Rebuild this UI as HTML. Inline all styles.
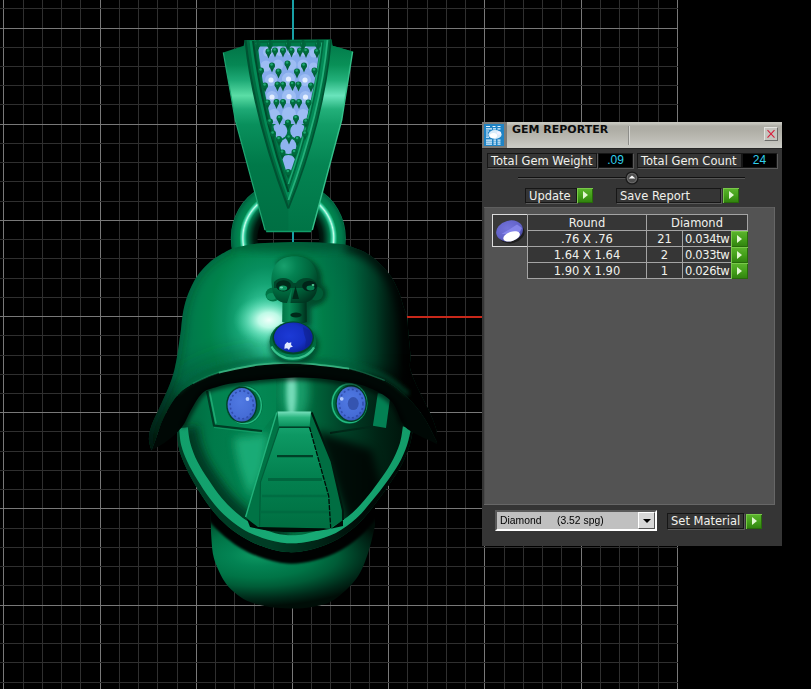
<!DOCTYPE html>
<html><head><meta charset="utf-8"><title>Gem Reporter</title>
<style>
html,body{margin:0;padding:0;background:#000;}
body{width:811px;height:689px;overflow:hidden;font-family:"DejaVu Sans","Liberation Sans",sans-serif;}
#vp{position:relative;width:811px;height:689px;background:#000;overflow:hidden;}
#grid{position:absolute;left:0;top:0;width:678px;height:689px;overflow:hidden;}
#grid i{position:absolute;display:block;}
#grid i.v{top:0;width:1px;height:689px;}
#grid i.h{left:0;height:1px;width:678px;}
#grid i.m{background:#2f2f2f;}
#grid i.M{background:#787878;}
#axisx{position:absolute;left:293px;top:316px;width:400px;height:2px;background:#c8281a;}
#axisy{position:absolute;left:292px;top:0;width:2px;height:317px;background:#18a0a6;}
#model{position:absolute;left:0;top:0;}
/* panel */
#panel{position:absolute;left:482px;top:122px;width:300px;height:424px;background:#353535;font-size:11.5px;color:#f1f1ec;}
#tbar{position:absolute;left:0;top:0;width:300px;height:26px;box-shadow:0 1px 0 #262626;background:linear-gradient(#c9c9c1 0,#c3c3bb 2px,#aeada5 4px,#b0afa7 9px,#bcbbb4 17px,#c9c9c3 24px,#cacac4 26px);}
#ticon{position:absolute;left:0;top:0;}
#ttl{position:absolute;left:30px;top:0px;font-weight:bold;font-size:11px;color:#0c0c0c;line-height:16px;white-space:nowrap;}
#tdiv{position:absolute;left:146px;top:4px;width:1px;height:19px;background:#8d8d89;border-right:1px solid #d8d8d4;}
#xbtn{position:absolute;left:282px;top:5px;width:12px;height:12px;background:#c4c4be;border:1px solid #6c6c6a;border-top-color:#e4e4e0;border-left-color:#e4e4e0;line-height:0;}
.lbl{position:absolute;padding-left:3px;height:13px;line-height:14px;border:1px solid #161616;background:#353535;white-space:nowrap;color:#f1f1ec;box-shadow:1px 1px 0 #5a5a5a;}
.val{position:absolute;height:13px;line-height:13px;border:1px solid #161616;background:#000;color:#30d0ec;text-align:center;font-family:"Liberation Sans",sans-serif;font-size:12px;box-shadow:1px 1px 0 #5a5a5a;}
.go{position:absolute;display:block;width:16px;height:15px;background:linear-gradient(#5db52e,#44a01a 50%,#2f800e);box-shadow:inset 1px 1px 0 #79c84a,inset -1px -1px 0 #276b0a;}
.go:after{content:"";position:absolute;left:6px;top:3px;border-left:5px solid #e2f6d2;border-top:4px solid transparent;border-bottom:4px solid transparent;}
#sep{position:absolute;left:36px;top:55px;width:227px;height:1px;background:#111;border-bottom:1px solid #555;}
#knob{position:absolute;left:142px;top:48px;}
#inner{position:absolute;left:2px;top:85px;width:291px;height:298px;background:#535353;box-shadow:inset -1px -1px 0 #676767,inset 0 1px 0 #5e5e5e,inset 1px 0 0 #4a4a4a;}
#gem{position:absolute;left:8px;top:7px;width:34px;height:31px;border:1px solid #dcdcdc;background:#393939;line-height:0;}
#tb{position:absolute;left:43px;top:7px;border-collapse:collapse;font-size:11.5px;color:#f1f1ec;}
#tb td{border:1px solid #a4a4a4;background:#363636;height:15px;line-height:14px;padding:0;text-align:center;white-space:nowrap;position:relative;}
#tb .c1{width:118px;}
#tb .c3{width:35px;}
#tb .c4{width:65px;text-align:left;padding-left:2px;box-sizing:border-box;letter-spacing:-0.35px;}
#tb .g2{right:-1px;top:0;width:17px;height:16px;}
#tb .g2:after{top:4px;}
#sel{position:absolute;left:13px;top:388px;width:158px;height:17px;background:#c0c0c0;border:2px solid;border-color:#5a5a5a #fff #fff #5a5a5a;font-family:"Liberation Sans",sans-serif;font-size:12px;color:#000;}
#seltx,#seltx2{position:absolute;left:3px;top:1px;line-height:15px;white-space:nowrap;font-size:11.5px;transform:scaleX(0.9);transform-origin:0 0;}
#seltx2{left:60px;}
#dd{position:absolute;right:0;top:0;width:15px;height:15px;background:#d8d8d8;border:1px solid;border-color:#fff #555 #555 #fff;}
#dd i{position:absolute;left:4px;top:6px;border-top:4px solid #000;border-left:4px solid transparent;border-right:4px solid transparent;}

</style></head>
<body>
<div id="vp">
<div id="grid">
<i class="v M" style="left:3px"></i>
<i class="v m" style="left:23px"></i>
<i class="v m" style="left:42px"></i>
<i class="v m" style="left:61px"></i>
<i class="v m" style="left:80px"></i>
<i class="v M" style="left:100px"></i>
<i class="v m" style="left:119px"></i>
<i class="v m" style="left:138px"></i>
<i class="v m" style="left:157px"></i>
<i class="v m" style="left:177px"></i>
<i class="v M" style="left:196px"></i>
<i class="v m" style="left:215px"></i>
<i class="v m" style="left:234px"></i>
<i class="v m" style="left:254px"></i>
<i class="v m" style="left:273px"></i>
<i class="v M" style="left:292px"></i>
<i class="v m" style="left:311px"></i>
<i class="v m" style="left:330px"></i>
<i class="v m" style="left:350px"></i>
<i class="v m" style="left:369px"></i>
<i class="v M" style="left:388px"></i>
<i class="v m" style="left:407px"></i>
<i class="v m" style="left:427px"></i>
<i class="v m" style="left:446px"></i>
<i class="v m" style="left:465px"></i>
<i class="v M" style="left:484px"></i>
<i class="v m" style="left:504px"></i>
<i class="v m" style="left:523px"></i>
<i class="v m" style="left:542px"></i>
<i class="v m" style="left:561px"></i>
<i class="v M" style="left:581px"></i>
<i class="v m" style="left:600px"></i>
<i class="v m" style="left:619px"></i>
<i class="v m" style="left:638px"></i>
<i class="v m" style="left:658px"></i>
<i class="v M" style="left:677px"></i>
<i class="h m" style="top:8px"></i>
<i class="h M" style="top:28px"></i>
<i class="h m" style="top:47px"></i>
<i class="h m" style="top:66px"></i>
<i class="h m" style="top:85px"></i>
<i class="h m" style="top:104px"></i>
<i class="h M" style="top:124px"></i>
<i class="h m" style="top:143px"></i>
<i class="h m" style="top:162px"></i>
<i class="h m" style="top:181px"></i>
<i class="h m" style="top:201px"></i>
<i class="h M" style="top:220px"></i>
<i class="h m" style="top:239px"></i>
<i class="h m" style="top:258px"></i>
<i class="h m" style="top:278px"></i>
<i class="h m" style="top:297px"></i>
<i class="h M" style="top:316px"></i>
<i class="h m" style="top:335px"></i>
<i class="h m" style="top:355px"></i>
<i class="h m" style="top:374px"></i>
<i class="h m" style="top:393px"></i>
<i class="h M" style="top:412px"></i>
<i class="h m" style="top:431px"></i>
<i class="h m" style="top:451px"></i>
<i class="h m" style="top:470px"></i>
<i class="h m" style="top:489px"></i>
<i class="h M" style="top:508px"></i>
<i class="h m" style="top:528px"></i>
<i class="h m" style="top:547px"></i>
<i class="h m" style="top:566px"></i>
<i class="h m" style="top:585px"></i>
<i class="h M" style="top:605px"></i>
<i class="h m" style="top:624px"></i>
<i class="h m" style="top:643px"></i>
<i class="h m" style="top:662px"></i>
<i class="h m" style="top:682px"></i>
</div>
<div id="axisx"></div>
<div id="axisy"></div>
<svg id="model" width="811" height="689" viewBox="0 0 811 689">
<defs>
<radialGradient id="gHelm" gradientUnits="userSpaceOnUse" cx="0" cy="0" r="1" gradientTransform="translate(266 323) scale(125 170)">
 <stop offset="0" stop-color="#62E2BA"/><stop offset="0.08" stop-color="#48D0A6"/><stop offset="0.15" stop-color="#2CBB8E"/>
 <stop offset="0.23" stop-color="#15A474"/><stop offset="0.33" stop-color="#078E5E"/><stop offset="0.46" stop-color="#00834b"/><stop offset="0.62" stop-color="#00794B"/><stop offset="0.82" stop-color="#006B43"/><stop offset="1" stop-color="#005E3B"/>
</radialGradient>
<radialGradient id="gSpec" gradientUnits="userSpaceOnUse" cx="0" cy="0" r="1" gradientTransform="translate(269 320) scale(36 25)">
 <stop offset="0" stop-color="#F0FFFA" stop-opacity="1"/><stop offset="0.3" stop-color="#C4FCEA" stop-opacity="0.95"/><stop offset="0.6" stop-color="#7AE8C6" stop-opacity="0.6"/><stop offset="1" stop-color="#40D0A0" stop-opacity="0"/>
</radialGradient>
<radialGradient id="gRing" gradientUnits="userSpaceOnUse" cx="288.3" cy="238" r="57.5">
 <stop offset="0.53" stop-color="#000A06"/><stop offset="0.60" stop-color="#001C11"/><stop offset="0.66" stop-color="#00462C"/><stop offset="0.72" stop-color="#00784B"/>
 <stop offset="0.765" stop-color="#3CD2A5"/><stop offset="0.79" stop-color="#C8FFEB"/><stop offset="0.815" stop-color="#3CD2A5"/><stop offset="0.85" stop-color="#00874e"/>
 <stop offset="0.93" stop-color="#00784B"/><stop offset="0.985" stop-color="#00643E"/><stop offset="1" stop-color="#0A8A5C"/>
</radialGradient>
<linearGradient id="gBail" gradientUnits="userSpaceOnUse" x1="0" y1="40" x2="0" y2="232">
 <stop offset="0" stop-color="#007043"/><stop offset="0.13" stop-color="#068754"/><stop offset="0.21" stop-color="#1eaa76"/><stop offset="0.29" stop-color="#5bdea6"/>
 <stop offset="0.36" stop-color="#1eaa76"/><stop offset="0.44" stop-color="#09905c"/><stop offset="0.65" stop-color="#007949"/><stop offset="1" stop-color="#006f43"/>
</linearGradient>
<linearGradient id="gBailR" gradientUnits="userSpaceOnUse" x1="0" y1="40" x2="0" y2="232">
 <stop offset="0" stop-color="#007748"/><stop offset="0.13" stop-color="#099057"/><stop offset="0.21" stop-color="#23b07a"/><stop offset="0.29" stop-color="#6ae4bc"/>
 <stop offset="0.36" stop-color="#23b07a"/><stop offset="0.44" stop-color="#129d67"/><stop offset="0.65" stop-color="#048452"/><stop offset="1" stop-color="#007446"/>
</linearGradient>
<radialGradient id="gChin" gradientUnits="userSpaceOnUse" cx="0" cy="0" r="1" gradientTransform="translate(258 555) scale(130 51)">
 <stop offset="0" stop-color="#0d9862"/><stop offset="0.22" stop-color="#038353"/><stop offset="0.45" stop-color="#007446"/><stop offset="0.62" stop-color="#005c37"/>
 <stop offset="0.85" stop-color="#002919"/><stop offset="1" stop-color="#000d07"/>
</radialGradient>
<linearGradient id="gFace" gradientUnits="userSpaceOnUse" x1="180" y1="0" x2="410" y2="0">
 <stop offset="0" stop-color="#00663d"/><stop offset="0.15" stop-color="#007a4a"/><stop offset="0.35" stop-color="#038350"/><stop offset="0.58" stop-color="#00653b"/>
 <stop offset="0.72" stop-color="#003f26"/><stop offset="0.86" stop-color="#002415"/><stop offset="1" stop-color="#00120a"/>
</linearGradient>
<linearGradient id="gHelmDark" gradientUnits="userSpaceOnUse" x1="300" y1="0" x2="416" y2="0">
 <stop offset="0" stop-color="#000" stop-opacity="0"/><stop offset="0.39" stop-color="#000" stop-opacity="0.08"/><stop offset="0.47" stop-color="#000" stop-opacity="0.15"/>
 <stop offset="0.56" stop-color="#000" stop-opacity="0.28"/><stop offset="0.65" stop-color="#000" stop-opacity="0.41"/><stop offset="0.73" stop-color="#000" stop-opacity="0.6"/><stop offset="0.82" stop-color="#000" stop-opacity="0.8"/><stop offset="0.89" stop-color="#000" stop-opacity="0.95"/><stop offset="1" stop-color="#000" stop-opacity="0.98"/>
</linearGradient>
<linearGradient id="gTipL" gradientUnits="userSpaceOnUse" x1="183" y1="380" x2="152" y2="440">
 <stop offset="0" stop-color="#000" stop-opacity="0"/><stop offset="0.3" stop-color="#000" stop-opacity="0.35"/><stop offset="0.6" stop-color="#000" stop-opacity="0.62"/><stop offset="1" stop-color="#000" stop-opacity="0.85"/>
</linearGradient>
<linearGradient id="gChinDark" gradientUnits="userSpaceOnUse" x1="270" y1="0" x2="378" y2="0">
 <stop offset="0" stop-color="#000" stop-opacity="0"/><stop offset="0.45" stop-color="#000" stop-opacity="0.45"/><stop offset="0.8" stop-color="#000" stop-opacity="0.85"/><stop offset="1" stop-color="#000" stop-opacity="0.97"/>
</linearGradient>
<linearGradient id="gBand" gradientUnits="userSpaceOnUse" x1="180" y1="0" x2="410" y2="0">
 <stop offset="0" stop-color="#129f6b"/><stop offset="0.5" stop-color="#18ab76"/><stop offset="1" stop-color="#129c69"/>
</linearGradient>
<linearGradient id="gNose" gradientUnits="userSpaceOnUse" x1="0" y1="412" x2="0" y2="528">
 <stop offset="0" stop-color="#24b480"/><stop offset="0.2" stop-color="#0d9863"/><stop offset="0.55" stop-color="#038250"/><stop offset="1" stop-color="#006e41"/>
</linearGradient>
<radialGradient id="gBlue" cx="0.4" cy="0.45" r="0.65">
 <stop offset="0" stop-color="#1c3ad6"/><stop offset="0.6" stop-color="#1530c4"/><stop offset="1" stop-color="#0c1e8e"/>
</radialGradient>
<radialGradient id="gEye" cx="0.45" cy="0.4" r="0.7">
 <stop offset="0" stop-color="#5079e2"/><stop offset="0.7" stop-color="#456cd6"/><stop offset="1" stop-color="#2c4aa8"/>
</radialGradient>
<linearGradient id="gCap" gradientUnits="userSpaceOnUse" x1="0" y1="411" x2="0" y2="427">
 <stop offset="0" stop-color="#7fe3c2"/><stop offset="0.4" stop-color="#2ab57f"/><stop offset="1" stop-color="#088e5a"/>
</linearGradient>
<filter id="b4" x="-30%" y="-30%" width="160%" height="160%"><feGaussianBlur stdDeviation="4"/></filter>
<filter id="b8" x="-30%" y="-30%" width="160%" height="160%"><feGaussianBlur stdDeviation="8"/></filter>
<filter id="b12" x="-50%" y="-50%" width="200%" height="200%"><feGaussianBlur stdDeviation="12"/></filter>
<filter id="b2" x="-30%" y="-30%" width="160%" height="160%"><feGaussianBlur stdDeviation="2"/></filter>
<filter id="b1" x="-30%" y="-30%" width="160%" height="160%"><feGaussianBlur stdDeviation="1"/></filter>
<clipPath id="cHelm"><path d="M232.0 248.4 C230.2 249.3 225.5 251.6 221.5 254.1 C217.5 256.6 212.2 259.9 208.1 263.7 C203.9 267.5 199.9 271.9 196.6 277.0 C193.2 282.1 190.2 288.6 188.0 294.3 C185.8 300.1 184.4 305.4 183.2 311.5 C182.0 317.6 181.5 325.9 180.9 330.6 C180.3 335.4 180.2 335.1 179.5 340.0 C178.8 344.9 177.8 353.1 176.5 359.7 C175.2 366.3 174.1 372.3 171.6 379.5 C169.1 386.7 165.0 395.6 161.7 403.1 C158.4 410.7 153.9 418.9 151.8 424.8 C149.7 430.7 149.0 434.3 148.9 438.6 C148.8 442.9 151.1 448.5 151.5 450.5 C152.2 448.5 154.1 443.9 156.0 438.6 C157.9 433.4 159.6 426.0 163.0 419.0 C166.4 412.0 171.5 402.4 176.5 396.5 C181.5 390.6 185.9 387.5 193.0 383.5 C200.1 379.5 208.0 375.6 218.9 372.5 C229.8 369.4 244.9 366.2 258.4 364.7 C271.9 363.1 284.7 362.5 299.8 363.2 C314.9 363.9 335.1 365.7 349.2 368.6 C363.3 371.5 374.8 375.5 384.7 380.4 C394.6 385.3 401.7 391.8 408.4 398.2 C415.1 404.6 420.2 411.7 425.0 419.0 C429.8 426.3 435.0 438.2 437.0 442.0 C436.8 439.8 437.5 434.3 436.0 428.8 C434.5 423.3 431.1 415.6 428.1 409.0 C425.1 402.4 421.2 395.9 418.2 389.3 C415.2 382.7 411.6 375.2 410.3 369.6 C409.0 364.0 410.7 361.3 410.4 355.4 C410.1 349.5 409.1 340.8 408.5 334.4 C407.9 328.0 407.8 321.7 407.0 317.2 C406.2 312.7 405.1 311.8 403.7 307.6 C402.3 303.5 401.0 297.4 398.9 292.3 C396.8 287.2 394.5 281.8 391.3 277.0 C388.1 272.2 383.9 267.7 379.8 263.7 C375.7 259.7 372.2 256.4 366.5 253.2 C360.8 250.0 348.9 246.0 345.4 244.6 C340.8 244.3 327.6 243.0 318.0 242.6 C308.4 242.2 298.0 242.0 288.0 242.2 C278.0 242.4 267.3 242.6 258.0 243.6 C248.7 244.6 236.3 247.6 232.0 248.4Z"/></clipPath>
<clipPath id="cFace"><path d="M177.5 428.5 C177.7 431.4 177.4 440.2 178.5 446.0 C179.6 451.8 181.5 457.0 184.0 463.0 C186.5 469.0 189.9 475.7 193.5 482.0 C197.1 488.3 201.2 494.9 205.5 501.0 C209.8 507.1 214.1 513.0 219.5 518.5 C224.9 524.0 231.2 529.5 238.0 534.0 C244.8 538.5 251.8 542.5 260.0 545.5 C268.1 548.5 278.1 551.4 286.9 552.0 C295.7 552.6 304.5 551.2 313.0 549.0 C321.5 546.8 330.3 543.3 338.0 539.0 C345.7 534.7 352.8 528.9 359.0 523.0 C365.2 517.1 370.4 510.0 375.5 503.5 C380.6 497.0 385.2 490.4 389.5 484.0 C393.8 477.6 398.2 471.3 401.5 465.0 C404.8 458.7 407.6 451.9 409.5 446.0 C411.4 440.1 412.4 432.2 413.0 429.5 L404 372 L186 372 Z"/></clipPath>
<clipPath id="cChin"><path d="M210.7 512.0 C210.8 516.2 210.8 529.2 211.3 537.0 C211.9 544.8 212.0 551.5 214.0 558.6 C216.0 565.7 220.1 574.1 223.4 579.7 C226.7 585.3 230.1 588.5 234.0 592.0 C237.9 595.5 242.2 598.5 246.9 600.7 C251.6 603.0 256.9 604.3 262.0 605.5 C267.1 606.7 272.0 607.3 277.3 607.8 C282.6 608.3 287.9 608.7 293.7 608.6 C299.5 608.5 305.4 608.4 312.0 607.0 C318.6 605.6 326.1 604.8 333.6 600.0 C341.1 595.2 351.0 586.0 356.8 578.0 C362.6 570.0 365.4 560.7 368.4 552.0 C371.4 543.3 373.9 530.3 375.0 526.0 L375 500 L210 500Z"/></clipPath>
</defs>
<path d="M288.3 180.5a57.5 57.5 0 1 0 0.01 0zM288.3 207.2a30.8 30.8 0 1 1 -0.01 0z" fill="url(#gRing)" fill-rule="evenodd"/>
<g id="bail">
<path d="M223.3 52.5 L243.7 45.7 L244.6 40 L331.6 39.4 L332.6 45.7 L352.6 51.6 L341.7 120 L312.3 230 L311 231.5 L266.2 231.5 L265 230 L235.3 120Z" fill="url(#gBail)"/>
<path d="M332.6 45.7 L352.6 51.6 L341.7 120 L312.3 230 L311 231.5 L288.4 231.5 L288.4 208.4 C300 175 318 110 326 40Z" fill="url(#gBailR)"/>
<path d="M223.3 52.5 L235.3 120 L265 230" stroke="#1ea571" stroke-width="1.2" fill="none"/>
<path d="M352.6 51.6 L341.7 120 L312.3 230" stroke="#35c08a" stroke-width="1.4" fill="none"/>
<path d="M266.2 231.5H311" stroke="#129d69" stroke-width="1.3" fill="none"/>
<path d="M245.5 40.2 L331 39.6 C326 100 308 160 288.4 208.4 C270 160 252 100 245.5 40.2Z" fill="#006c40"/>
<path d="M245.5 40.2 C252 100 270 160 288.4 208.4" fill="none" stroke="#005232" stroke-width="2.2"/>
<path d="M331 39.6 C326 100 308 160 288.4 208.4" fill="none" stroke="#005232" stroke-width="1.6"/>
<path d="M249.5 40.5 L327.5 40 C322 100 305 155 288.4 200 C272 155 256 100 249.5 40.5Z" fill="#048a56"/>
<path d="M327.5 40 C322 100 305 155 288.4 200" fill="none" stroke="#23b07a" stroke-width="1.8"/>
<path d="M253 41 L324 40.5 C318 98 303 150 288.4 192 C274 150 260 98 253 41Z" fill="#00683e"/>
<path d="M253 41 C260 98 274 150 288.4 192" fill="none" stroke="#004a2c" stroke-width="2"/>
<path d="M256 43 L321.5 42.5 C315.5 96 302 145 288.4 184 C275.5 145 263 96 256 43Z" fill="#007a4a"/>
<path d="M321.5 42.5 C315.5 96 302 145 288.4 184" fill="none" stroke="#1da872" stroke-width="1.5"/>
<clipPath id="cGem"><path d="M258 46.6 L319.8 46.6 C314 95 301.5 142 288.4 178 C276.5 142 264 95 258 46.6Z"/></clipPath>
<path d="M258 46.6 L319.8 46.6 C314 95 301.5 142 288.4 178 C276.5 142 264 95 258 46.6Z" fill="#007547"/>
<path d="M258 46.6 L319.8 46.6 C316 80 310 104 305 124 L272 124 C267 104 261.5 80 258 46.6Z" fill="#86abeb"/>
<g clip-path="url(#cGem)">
<circle cx="268.0" cy="52.0" r="5.0" fill="#9dbdf3"/>
<circle cx="280.0" cy="51.0" r="5.0" fill="#9dbdf3"/>
<circle cx="292.0" cy="51.0" r="5.0" fill="#9dbdf3"/>
<circle cx="304.0" cy="51.0" r="5.0" fill="#9dbdf3"/>
<circle cx="314.0" cy="53.0" r="4.5" fill="#9dbdf3"/>
<circle cx="266.0" cy="66.0" r="5.5" fill="#9dbdf3"/>
<circle cx="278.0" cy="65.0" r="5.5" fill="#9dbdf3"/>
<circle cx="291.0" cy="65.0" r="5.5" fill="#9dbdf3"/>
<circle cx="303.0" cy="65.0" r="5.5" fill="#9dbdf3"/>
<circle cx="313.5" cy="67.0" r="4.5" fill="#9dbdf3"/>
<circle cx="271.0" cy="80.0" r="6.0" fill="#9dbdf3"/>
<circle cx="288.5" cy="79.0" r="6.5" fill="#9dbdf3"/>
<circle cx="305.0" cy="80.0" r="6.0" fill="#9dbdf3"/>
<circle cx="272.0" cy="97.0" r="6.0" fill="#9dbdf3"/>
<circle cx="289.0" cy="96.5" r="7.0" fill="#9dbdf3"/>
<circle cx="305.5" cy="97.0" r="6.0" fill="#9dbdf3"/>
<circle cx="274.0" cy="115.0" r="6.0" fill="#9dbdf3"/>
<circle cx="289.0" cy="114.0" r="7.0" fill="#9dbdf3"/>
<circle cx="303.0" cy="115.0" r="6.0" fill="#9dbdf3"/>
<circle cx="279.5" cy="131.0" r="7.8" fill="#8fb3f0"/>
<circle cx="298.0" cy="131.0" r="7.8" fill="#8fb3f0"/>
<circle cx="288.3" cy="146.0" r="8.0" fill="#8fb3f0"/>
<circle cx="288.3" cy="163.0" r="8.0" fill="#8fb3f0"/>
</g>
<circle cx="271.0" cy="80.0" r="2.6" fill="#e4efff"/>
<circle cx="288.5" cy="79.0" r="2.6" fill="#e4efff"/>
<circle cx="305.0" cy="80.0" r="2.6" fill="#e4efff"/>
<circle cx="272.0" cy="97.0" r="2.6" fill="#e4efff"/>
<circle cx="289.0" cy="96.5" r="2.6" fill="#e4efff"/>
<circle cx="305.5" cy="97.0" r="2.6" fill="#e4efff"/>
<path d="M254.7 45.1 L260.3 45.1 L257.5 51.5Z" fill="#005c35"/>
<circle cx="257.5" cy="44.5" r="3" fill="#006a3e"/>
<circle cx="257.1" cy="43.5" r="1.3" fill="#1ea872"/>
<path d="M267.2 45.1 L272.8 45.1 L270.0 51.5Z" fill="#005c35"/>
<circle cx="270.0" cy="44.5" r="3" fill="#006a3e"/>
<circle cx="269.6" cy="43.5" r="1.3" fill="#1ea872"/>
<path d="M285.2 45.1 L290.8 45.1 L288.0 51.5Z" fill="#005c35"/>
<circle cx="288.0" cy="44.5" r="3" fill="#006a3e"/>
<circle cx="287.6" cy="43.5" r="1.3" fill="#1ea872"/>
<path d="M300.2 45.1 L305.8 45.1 L303.0 51.5Z" fill="#005c35"/>
<circle cx="303.0" cy="44.5" r="3" fill="#006a3e"/>
<circle cx="302.6" cy="43.5" r="1.3" fill="#1ea872"/>
<path d="M315.2 45.1 L320.8 45.1 L318.0 51.5Z" fill="#005c35"/>
<circle cx="318.0" cy="44.5" r="3" fill="#006a3e"/>
<circle cx="317.6" cy="43.5" r="1.3" fill="#1ea872"/>
<path d="M265.7 52.1 L271.3 52.1 L268.5 58.5Z" fill="#005c35"/>
<circle cx="268.5" cy="51.5" r="3" fill="#006a3e"/>
<circle cx="268.1" cy="50.5" r="1.3" fill="#1ea872"/>
<path d="M272.2 51.1 L277.8 51.1 L275.0 57.5Z" fill="#005c35"/>
<circle cx="275.0" cy="50.5" r="3" fill="#006a3e"/>
<circle cx="274.6" cy="49.5" r="1.3" fill="#1ea872"/>
<path d="M280.2 51.1 L285.8 51.1 L283.0 57.5Z" fill="#005c35"/>
<circle cx="283.0" cy="50.5" r="3" fill="#006a3e"/>
<circle cx="282.6" cy="49.5" r="1.3" fill="#1ea872"/>
<path d="M288.7 51.1 L294.3 51.1 L291.5 57.5Z" fill="#005c35"/>
<circle cx="291.5" cy="50.5" r="3" fill="#006a3e"/>
<circle cx="291.1" cy="49.5" r="1.3" fill="#1ea872"/>
<path d="M297.2 51.1 L302.8 51.1 L300.0 57.5Z" fill="#005c35"/>
<circle cx="300.0" cy="50.5" r="3" fill="#006a3e"/>
<circle cx="299.6" cy="49.5" r="1.3" fill="#1ea872"/>
<path d="M303.2 51.6 L308.8 51.6 L306.0 58.0Z" fill="#005c35"/>
<circle cx="306.0" cy="51.0" r="3" fill="#006a3e"/>
<circle cx="305.6" cy="50.0" r="1.3" fill="#1ea872"/>
<path d="M314.2 52.1 L319.8 52.1 L317.0 58.5Z" fill="#005c35"/>
<circle cx="317.0" cy="51.5" r="3" fill="#006a3e"/>
<circle cx="316.6" cy="50.5" r="1.3" fill="#1ea872"/>
<path d="M269.2 66.1 L274.8 66.1 L272.0 72.5Z" fill="#005c35"/>
<circle cx="272.0" cy="65.5" r="3" fill="#006a3e"/>
<circle cx="271.6" cy="64.5" r="1.3" fill="#1ea872"/>
<path d="M284.7 64.1 L290.3 64.1 L287.5 70.5Z" fill="#005c35"/>
<circle cx="287.5" cy="63.5" r="3" fill="#006a3e"/>
<circle cx="287.1" cy="62.5" r="1.3" fill="#1ea872"/>
<path d="M301.2 66.1 L306.8 66.1 L304.0 72.5Z" fill="#005c35"/>
<circle cx="304.0" cy="65.5" r="3" fill="#006a3e"/>
<circle cx="303.6" cy="64.5" r="1.3" fill="#1ea872"/>
<path d="M258.2 71.1 L263.8 71.1 L261.0 77.5Z" fill="#005c35"/>
<circle cx="261.0" cy="70.5" r="3" fill="#006a3e"/>
<circle cx="260.6" cy="69.5" r="1.3" fill="#1ea872"/>
<path d="M275.7 72.1 L281.3 72.1 L278.5 78.5Z" fill="#005c35"/>
<circle cx="278.5" cy="71.5" r="3" fill="#006a3e"/>
<circle cx="278.1" cy="70.5" r="1.3" fill="#1ea872"/>
<path d="M294.2 72.1 L299.8 72.1 L297.0 78.5Z" fill="#005c35"/>
<circle cx="297.0" cy="71.5" r="3" fill="#006a3e"/>
<circle cx="296.6" cy="70.5" r="1.3" fill="#1ea872"/>
<path d="M311.7 71.1 L317.3 71.1 L314.5 77.5Z" fill="#005c35"/>
<circle cx="314.5" cy="70.5" r="3" fill="#006a3e"/>
<circle cx="314.1" cy="69.5" r="1.3" fill="#1ea872"/>
<path d="M262.2 86.1 L267.8 86.1 L265.0 92.5Z" fill="#005c35"/>
<circle cx="265.0" cy="85.5" r="3" fill="#006a3e"/>
<circle cx="264.6" cy="84.5" r="1.3" fill="#1ea872"/>
<path d="M274.7 85.1 L280.3 85.1 L277.5 91.5Z" fill="#005c35"/>
<circle cx="277.5" cy="84.5" r="3" fill="#006a3e"/>
<circle cx="277.1" cy="83.5" r="1.3" fill="#1ea872"/>
<path d="M280.2 85.1 L285.8 85.1 L283.0 91.5Z" fill="#005c35"/>
<circle cx="283.0" cy="84.5" r="3" fill="#006a3e"/>
<circle cx="282.6" cy="83.5" r="1.3" fill="#1ea872"/>
<path d="M289.7 84.6 L295.3 84.6 L292.5 91.0Z" fill="#005c35"/>
<circle cx="292.5" cy="84.0" r="3" fill="#006a3e"/>
<circle cx="292.1" cy="83.0" r="1.3" fill="#1ea872"/>
<path d="M295.7 85.1 L301.3 85.1 L298.5 91.5Z" fill="#005c35"/>
<circle cx="298.5" cy="84.5" r="3" fill="#006a3e"/>
<circle cx="298.1" cy="83.5" r="1.3" fill="#1ea872"/>
<path d="M308.2 86.1 L313.8 86.1 L311.0 92.5Z" fill="#005c35"/>
<circle cx="311.0" cy="85.5" r="3" fill="#006a3e"/>
<circle cx="310.6" cy="84.5" r="1.3" fill="#1ea872"/>
<path d="M264.7 103.1 L270.3 103.1 L267.5 109.5Z" fill="#005c35"/>
<circle cx="267.5" cy="102.5" r="3" fill="#006a3e"/>
<circle cx="267.1" cy="101.5" r="1.3" fill="#1ea872"/>
<path d="M273.7 102.6 L279.3 102.6 L276.5 109.0Z" fill="#005c35"/>
<circle cx="276.5" cy="102.0" r="3" fill="#006a3e"/>
<circle cx="276.1" cy="101.0" r="1.3" fill="#1ea872"/>
<path d="M280.2 102.6 L285.8 102.6 L283.0 109.0Z" fill="#005c35"/>
<circle cx="283.0" cy="102.0" r="3" fill="#006a3e"/>
<circle cx="282.6" cy="101.0" r="1.3" fill="#1ea872"/>
<path d="M290.2 102.6 L295.8 102.6 L293.0 109.0Z" fill="#005c35"/>
<circle cx="293.0" cy="102.0" r="3" fill="#006a3e"/>
<circle cx="292.6" cy="101.0" r="1.3" fill="#1ea872"/>
<path d="M296.2 102.6 L301.8 102.6 L299.0 109.0Z" fill="#005c35"/>
<circle cx="299.0" cy="102.0" r="3" fill="#006a3e"/>
<circle cx="298.6" cy="101.0" r="1.3" fill="#1ea872"/>
<path d="M305.7 103.1 L311.3 103.1 L308.5 109.5Z" fill="#005c35"/>
<circle cx="308.5" cy="102.5" r="3" fill="#006a3e"/>
<circle cx="308.1" cy="101.5" r="1.3" fill="#1ea872"/>
<path d="M267.2 122.1 L272.8 122.1 L270.0 128.5Z" fill="#005c35"/>
<circle cx="270.0" cy="121.5" r="3" fill="#006a3e"/>
<circle cx="269.6" cy="120.5" r="1.3" fill="#1ea872"/>
<path d="M276.7 118.6 L282.3 118.6 L279.5 125.0Z" fill="#005c35"/>
<circle cx="279.5" cy="118.0" r="3" fill="#006a3e"/>
<circle cx="279.1" cy="117.0" r="1.3" fill="#1ea872"/>
<path d="M293.2 118.6 L298.8 118.6 L296.0 125.0Z" fill="#005c35"/>
<circle cx="296.0" cy="118.0" r="3" fill="#006a3e"/>
<circle cx="295.6" cy="117.0" r="1.3" fill="#1ea872"/>
<path d="M303.2 122.1 L308.8 122.1 L306.0 128.5Z" fill="#005c35"/>
<circle cx="306.0" cy="121.5" r="3" fill="#006a3e"/>
<circle cx="305.6" cy="120.5" r="1.3" fill="#1ea872"/>
<path d="M285.2 123.1 L290.8 123.1 L288.0 129.5Z" fill="#005c35"/>
<circle cx="288.0" cy="122.5" r="3" fill="#006a3e"/>
<circle cx="287.6" cy="121.5" r="1.3" fill="#1ea872"/>
<path d="M270.2 134.1 L275.8 134.1 L273.0 140.5Z" fill="#005c35"/>
<circle cx="273.0" cy="133.5" r="3" fill="#006a3e"/>
<circle cx="272.6" cy="132.5" r="1.3" fill="#1ea872"/>
<path d="M286.2 138.1 L291.8 138.1 L289.0 144.5Z" fill="#005c35"/>
<circle cx="289.0" cy="137.5" r="3" fill="#006a3e"/>
<circle cx="288.6" cy="136.5" r="1.3" fill="#1ea872"/>
<path d="M302.2 134.1 L307.8 134.1 L305.0 140.5Z" fill="#005c35"/>
<circle cx="305.0" cy="133.5" r="3" fill="#006a3e"/>
<circle cx="304.6" cy="132.5" r="1.3" fill="#1ea872"/>
<path d="M276.2 139.6 L281.8 139.6 L279.0 146.0Z" fill="#005c35"/>
<circle cx="279.0" cy="139.0" r="3" fill="#006a3e"/>
<circle cx="278.6" cy="138.0" r="1.3" fill="#1ea872"/>
<path d="M294.7 139.6 L300.3 139.6 L297.5 146.0Z" fill="#005c35"/>
<circle cx="297.5" cy="139.0" r="3" fill="#006a3e"/>
<circle cx="297.1" cy="138.0" r="1.3" fill="#1ea872"/>
<path d="M279.7 153.1 L285.3 153.1 L282.5 159.5Z" fill="#005c35"/>
<circle cx="282.5" cy="152.5" r="3" fill="#006a3e"/>
<circle cx="282.1" cy="151.5" r="1.3" fill="#1ea872"/>
<path d="M291.7 152.6 L297.3 152.6 L294.5 159.0Z" fill="#005c35"/>
<circle cx="294.5" cy="152.0" r="3" fill="#006a3e"/>
<circle cx="294.1" cy="151.0" r="1.3" fill="#1ea872"/>
<path d="M285.4 172.6 L291.0 172.6 L288.2 179.0Z" fill="#005c35"/>
<circle cx="288.2" cy="172.0" r="3" fill="#006a3e"/>
<circle cx="287.8" cy="171.0" r="1.3" fill="#1ea872"/>
<rect x="256.2" y="40" width="2.6" height="9" fill="#00633b"/>
<rect x="268.7" y="40" width="2.6" height="9" fill="#00633b"/>
<rect x="286.7" y="40" width="2.6" height="9" fill="#00633b"/>
<rect x="301.7" y="40" width="2.6" height="9" fill="#00633b"/>
<rect x="316.7" y="40" width="2.6" height="9" fill="#00633b"/>
</g>
<g id="head">
<path d="M210.7 512.0 C210.8 516.2 210.8 529.2 211.3 537.0 C211.9 544.8 212.0 551.5 214.0 558.6 C216.0 565.7 220.1 574.1 223.4 579.7 C226.7 585.3 230.1 588.5 234.0 592.0 C237.9 595.5 242.2 598.5 246.9 600.7 C251.6 603.0 256.9 604.3 262.0 605.5 C267.1 606.7 272.0 607.3 277.3 607.8 C282.6 608.3 287.9 608.7 293.7 608.6 C299.5 608.5 305.4 608.4 312.0 607.0 C318.6 605.6 326.1 604.8 333.6 600.0 C341.1 595.2 351.0 586.0 356.8 578.0 C362.6 570.0 365.4 560.7 368.4 552.0 C371.4 543.3 373.9 530.3 375.0 526.0 L375 500 L210 500Z" fill="url(#gChin)"/>
<g clip-path="url(#cChin)">
<path d="M205.5 501.0 C207.8 503.9 214.1 513.0 219.5 518.5 C224.9 524.0 231.2 529.5 238.0 534.0 C244.8 538.5 251.8 542.5 260.0 545.5 C268.1 548.5 278.1 551.4 286.9 552.0 C295.7 552.6 304.5 551.2 313.0 549.0 C321.5 546.8 330.3 543.3 338.0 539.0 C345.7 534.7 352.8 528.9 359.0 523.0 C365.2 517.1 370.4 510.0 375.5 503.5 C380.6 497.0 385.2 490.4 389.5 484.0 C393.8 477.6 398.2 471.3 401.5 465.0 C404.8 458.7 407.6 451.9 409.5 446.0 C411.4 440.1 412.4 432.2 413.0 429.5" transform="translate(0.5,5)" fill="none" stroke="#000" stroke-opacity="0.98" stroke-width="13" filter="url(#b1)"/></g>
<path d="M177.5 428.5 C177.7 431.4 177.4 440.2 178.5 446.0 C179.6 451.8 181.5 457.0 184.0 463.0 C186.5 469.0 189.9 475.7 193.5 482.0 C197.1 488.3 201.2 494.9 205.5 501.0 C209.8 507.1 214.1 513.0 219.5 518.5 C224.9 524.0 231.2 529.5 238.0 534.0 C244.8 538.5 251.8 542.5 260.0 545.5 C268.1 548.5 278.1 551.4 286.9 552.0 C295.7 552.6 304.5 551.2 313.0 549.0 C321.5 546.8 330.3 543.3 338.0 539.0 C345.7 534.7 352.8 528.9 359.0 523.0 C365.2 517.1 370.4 510.0 375.5 503.5 C380.6 497.0 385.2 490.4 389.5 484.0 C393.8 477.6 398.2 471.3 401.5 465.0 C404.8 458.7 407.6 451.9 409.5 446.0 C411.4 440.1 412.4 432.2 413.0 429.5 L404 372 L186 372 Z" fill="url(#gFace)"/>
</g>
<g id="facedetail" clip-path="url(#cFace)">
<ellipse cx="295" cy="392" rx="14" ry="28" fill="#23b07a" opacity="0.7" filter="url(#b4)"/>
<ellipse cx="291.5" cy="392" rx="5" ry="26" fill="#86e6c6" opacity="0.85" filter="url(#b2)"/>
<path d="M288.0 535.2 C285.1 534.6 277.0 533.9 270.7 531.8 C264.4 529.7 256.1 525.9 250.3 522.7 C244.5 519.5 240.8 516.6 236.1 512.5 C231.4 508.4 226.5 503.7 221.9 498.3 C217.3 492.9 212.8 486.1 208.7 480.0 C204.6 473.9 200.6 467.8 197.5 461.7 C194.4 455.6 192.0 449.1 190.4 443.4 C188.8 437.6 188.2 429.9 187.8 427.2" fill="none" stroke="#002a1a" stroke-width="20" stroke-opacity="0.8" filter="url(#b4)"/>
<path d="M234 438 L268 434 L263 470 L251 497 Q237 470 234 438Z" fill="#1fb07a" opacity="0.9" filter="url(#b4)"/>
<path d="M207 391 L214 425.5 L262 431 L276 413 L276 380 L230 383Z" fill="#048a56" opacity="0.55"/>
<path d="M207 391 L214 425.5 L262 431" fill="none" stroke="#003d25" stroke-width="2.2"/>
<path d="M209.5 391 L216 423.5" fill="none" stroke="#1ea872" stroke-width="1.6"/>
<path d="M214 427.5 L262 433" fill="none" stroke="#1ea872" stroke-width="1.2" opacity="0.6"/>
<path d="M377.8 393.3 L390.6 394.5 L386 428 L372.9 425.8Z" fill="#038053"/>
<path d="M372.9 426.5 L330 433" fill="none" stroke="#002919" stroke-width="2"/>
<path d="M316 430 L348 520 L330 535 L385 500 L372 450 Z" fill="#000" opacity="0.8" filter="url(#b4)"/>
</g>
<path d="M177.5 428.5 C177.7 431.4 177.4 440.2 178.5 446.0 C179.6 451.8 181.5 457.0 184.0 463.0 C186.5 469.0 189.9 475.7 193.5 482.0 C197.1 488.3 201.2 494.9 205.5 501.0 C209.8 507.1 214.1 513.0 219.5 518.5 C224.9 524.0 231.2 529.5 238.0 534.0 C244.8 538.5 251.8 542.5 260.0 545.5 C268.1 548.5 278.1 551.4 286.9 552.0 C295.7 552.6 304.5 551.2 313.0 549.0 C321.5 546.8 330.3 543.3 338.0 539.0 C345.7 534.7 352.8 528.9 359.0 523.0 C365.2 517.1 370.4 510.0 375.5 503.5 C380.6 497.0 385.2 490.4 389.5 484.0 C393.8 477.6 398.2 471.3 401.5 465.0 C404.8 458.7 407.6 451.9 409.5 446.0 C411.4 440.1 412.4 432.2 413.0 429.5 L411 429.2 C410.3 431.9 408.9 439.7 406.9 445.5 C404.9 451.3 402.2 457.7 398.8 463.8 C395.4 469.9 391.0 475.9 386.6 482.0 C382.2 488.1 377.5 494.2 372.4 500.3 C367.3 506.4 362.2 513.2 356.1 518.6 C350.0 524.0 343.2 529.2 335.8 532.9 C328.4 536.6 319.5 539.3 311.4 541.0 C303.2 542.7 295.0 543.7 286.9 543.2 C278.8 542.7 269.9 540.3 262.5 537.9 C255.1 535.5 248.6 532.7 242.2 528.8 C235.8 524.9 229.3 519.7 223.9 514.6 C218.5 509.5 214.1 504.1 209.7 498.3 C205.3 492.5 201.2 486.1 197.5 480.0 C193.8 473.9 190.1 467.4 187.4 461.7 C184.7 455.9 182.7 451.1 181.3 445.5 C179.9 439.9 179.5 431.1 179.2 428.2Z" fill="#003d25"/>
<path d="M177.5 428.5 C177.7 431.4 177.4 440.2 178.5 446.0 C179.6 451.8 181.5 457.0 184.0 463.0 C186.5 469.0 189.9 475.7 193.5 482.0 C197.1 488.3 201.2 494.9 205.5 501.0 C209.8 507.1 214.1 513.0 219.5 518.5 C224.9 524.0 231.2 529.5 238.0 534.0 C244.8 538.5 251.8 542.5 260.0 545.5 C268.1 548.5 278.1 551.4 286.9 552.0 C295.7 552.6 304.5 551.2 313.0 549.0 C321.5 546.8 330.3 543.3 338.0 539.0 C345.7 534.7 352.8 528.9 359.0 523.0 C365.2 517.1 370.4 510.0 375.5 503.5 C380.6 497.0 385.2 490.4 389.5 484.0 C393.8 477.6 398.2 471.3 401.5 465.0 C404.8 458.7 407.6 451.9 409.5 446.0 C411.4 440.1 412.4 432.2 413.0 429.5 L411 429.2 C410.3 431.9 408.9 439.7 406.9 445.5 C404.9 451.3 402.2 457.7 398.8 463.8 C395.4 469.9 391.0 475.9 386.6 482.0 C382.2 488.1 377.5 494.2 372.4 500.3 C367.3 506.4 362.2 513.2 356.1 518.6 C350.0 524.0 343.2 529.2 335.8 532.9 C328.4 536.6 319.5 539.3 311.4 541.0 C303.2 542.7 295.0 543.7 286.9 543.2 C278.8 542.7 269.9 540.3 262.5 537.9 C255.1 535.5 248.6 532.7 242.2 528.8 C235.8 524.9 229.3 519.7 223.9 514.6 C218.5 509.5 214.1 504.1 209.7 498.3 C205.3 492.5 201.2 486.1 197.5 480.0 C193.8 473.9 190.1 467.4 187.4 461.7 C184.7 455.9 182.7 451.1 181.3 445.5 C179.9 439.9 179.5 431.1 179.2 428.2Z" fill="url(#gChinDark)" opacity="0.9"/>
<path d="M179.2 428.2 C179.5 431.1 179.9 439.9 181.3 445.5 C182.7 451.1 184.7 455.9 187.4 461.7 C190.1 467.4 193.8 473.9 197.5 480.0 C201.2 486.1 205.3 492.5 209.7 498.3 C214.1 504.1 218.5 509.5 223.9 514.6 C229.3 519.7 235.8 524.9 242.2 528.8 C248.6 532.7 255.1 535.5 262.5 537.9 C269.9 540.3 278.8 542.7 286.9 543.2 C295.0 543.7 303.2 542.7 311.4 541.0 C319.5 539.3 328.4 536.6 335.8 532.9 C343.2 529.2 350.0 524.0 356.1 518.6 C362.2 513.2 367.3 506.4 372.4 500.3 C377.5 494.2 382.2 488.1 386.6 482.0 C391.0 475.9 395.4 469.9 398.8 463.8 C402.2 457.7 404.9 451.3 406.9 445.5 C408.9 439.7 410.3 431.9 411.0 429.2 L402.9 426.2 C402.4 429.1 401.8 437.1 399.8 443.4 C397.8 449.7 394.2 457.4 390.7 463.8 C387.1 470.2 382.9 475.9 378.5 482.0 C374.1 488.1 369.4 494.5 364.3 500.3 C359.2 506.1 353.8 512.2 348.0 516.6 C342.2 521.0 336.8 523.9 329.7 526.8 C322.6 529.7 312.2 532.5 305.3 533.9 C298.4 535.3 293.8 535.6 288.0 535.2 C282.2 534.9 277.0 533.9 270.7 531.8 C264.4 529.7 256.1 525.9 250.3 522.7 C244.5 519.5 240.8 516.6 236.1 512.5 C231.4 508.4 226.5 503.7 221.9 498.3 C217.3 492.9 212.8 486.1 208.7 480.0 C204.6 473.9 200.6 467.8 197.5 461.7 C194.4 455.6 192.0 449.1 190.4 443.4 C188.8 437.6 188.2 429.9 187.8 427.2Z" fill="url(#gBand)"/>
<g id="nose">
<path d="M276.8 412.5 L311.7 412.5 L331.7 461.7 L342.9 510.5 L343 520 L331 528 L258 528 L245.6 517Z" fill="#007345"/>
<path d="M311.7 412.5 L331.7 461.7 L342.9 510.5 L343 520 L331 527 L328.7 496 L309.5 427Z" fill="#006e42"/>
<path d="M311.7 412.5 L331.7 461.7 L342.9 510.5 L343 520" fill="none" stroke="#00180e" stroke-width="2"/>
<path d="M277.5 411.5 L311 411.5 L309.5 427 L279 427Z" fill="url(#gCap)"/>
<path d="M276.8 412.5 L245.6 517" stroke="#22b27b" stroke-width="1.4" fill="none"/>
<path d="M279 427.2 L309.5 427.2 L328.7 496 L330.7 528 L259.5 526.8 L260.5 482Z" fill="url(#gNose)"/>
<path d="M279 427.2 L309.5 427.2" stroke="#003d25" stroke-width="1.5"/>
<path d="M277 456.2 H313" stroke="#004027" stroke-width="2.2"/>
<path d="M268 479.5 H322" stroke="#00603b" stroke-width="3" opacity="0.8"/>
<path d="M262 496 H327" stroke="#00663e" stroke-width="2.5" opacity="0.6"/>
<path d="M261 512 H329" stroke="#00663e" stroke-width="2.5" opacity="0.6"/>
<path d="M309.5 427.2 L328.7 496 L330.7 528" stroke="#000c06" stroke-width="1.3" stroke-dasharray="5 1.2" fill="none"/>
<path d="M279 427.2 L260.5 482 L259.5 526.8" stroke="#005e39" stroke-width="1.2" fill="none"/>
<path d="M247 519 L258 527 L331 528.5 L343 520 L343 526 Q296 538 250 527Z" fill="#000c06"/>
</g>
<ellipse cx="244.4" cy="405.2" rx="18.2" ry="19.6" fill="#006a3f"/>
<ellipse cx="244.4" cy="405.2" rx="16.9" ry="18.3" fill="none" stroke="#23b981" stroke-width="1.5"/>
<ellipse cx="241.8" cy="404.8" rx="15.6" ry="18.2" fill="#004027"/>
<ellipse cx="241.8" cy="404.8" rx="14.2" ry="16.8" fill="url(#gEye)"/>
<ellipse cx="241.8" cy="404.8" rx="11.6" ry="14.0" fill="none" stroke="#2a46a4" stroke-width="1.6" stroke-dasharray="2 2.4" opacity="0.8"/>
<circle cx="247.5" cy="399.0" r="1.9" fill="#b4ccff"/>
<ellipse cx="349.4" cy="403.3" rx="18.4" ry="20.6" fill="#006a3f"/>
<ellipse cx="349.4" cy="403.3" rx="17.1" ry="19.3" fill="none" stroke="#23b981" stroke-width="1.5"/>
<ellipse cx="351.2" cy="403.6" rx="15.8" ry="18.4" fill="#004027"/>
<ellipse cx="351.2" cy="403.6" rx="14.4" ry="17.0" fill="url(#gEye)"/>
<ellipse cx="351.2" cy="403.6" rx="11.8" ry="14.2" fill="none" stroke="#2a46a4" stroke-width="1.6" stroke-dasharray="2 2.4" opacity="0.8"/>
<ellipse cx="353.2" cy="403.6" rx="5.5" ry="6.5" fill="#3554b0"/>
<circle cx="341.7" cy="398.8" r="1.9" fill="#b4ccff"/>
<path d="M151.5 450.5 C152.2 448.5 154.1 443.9 156.0 438.6 C157.9 433.4 159.6 426.0 163.0 419.0 C166.4 412.0 171.5 402.4 176.5 396.5 C181.5 390.6 185.9 387.5 193.0 383.5 C200.1 379.5 208.0 375.6 218.9 372.5 C229.8 369.4 244.9 366.2 258.4 364.7 C271.9 363.1 284.7 362.5 299.8 363.2 C314.9 363.9 335.1 365.7 349.2 368.6 C363.3 371.5 374.8 375.5 384.7 380.4 C394.6 385.3 401.7 391.8 408.4 398.2 C415.1 404.6 420.2 411.7 425.0 419.0 C429.8 426.3 435.0 438.2 437.0 442.0 L437 444 C433.2 442.2 419.7 436.3 414.0 433.0 C408.3 429.7 406.7 429.2 403.0 424.0 C399.3 418.8 397.2 407.8 392.0 402.0 C386.8 396.2 379.2 392.2 372.0 389.0 C364.8 385.8 361.0 384.4 349.0 382.5 C337.0 380.6 318.4 377.5 300.0 377.5 C281.6 377.5 253.1 380.6 238.6 382.4 C224.1 384.1 219.2 386.1 213.0 388.0 C206.8 389.9 205.2 390.3 201.5 394.0 C197.8 397.7 194.2 404.5 191.0 410.0 C187.8 415.5 186.0 421.8 182.0 427.0 C178.0 432.2 172.1 437.1 167.0 441.0 C161.9 444.9 154.1 448.9 151.5 450.5Z" fill="#000805"/>
<path d="M403.0 424.0 C401.2 420.3 397.2 407.8 392.0 402.0 C386.8 396.2 379.2 392.2 372.0 389.0 C364.8 385.8 361.0 384.4 349.0 382.5 C337.0 380.6 318.4 377.5 300.0 377.5 C281.6 377.5 253.1 380.6 238.6 382.4 C224.1 384.1 219.2 386.1 213.0 388.0 C206.8 389.9 205.2 390.3 201.5 394.0 C197.8 397.7 194.2 404.5 191.0 410.0 C187.8 415.5 183.5 424.2 182.0 427.0" fill="none" stroke="#000" stroke-opacity="0.6" stroke-width="6" filter="url(#b2)"/>
<g id="helmet">
<path d="M232.0 248.4 C230.2 249.3 225.5 251.6 221.5 254.1 C217.5 256.6 212.2 259.9 208.1 263.7 C203.9 267.5 199.9 271.9 196.6 277.0 C193.2 282.1 190.2 288.6 188.0 294.3 C185.8 300.1 184.4 305.4 183.2 311.5 C182.0 317.6 181.5 325.9 180.9 330.6 C180.3 335.4 180.2 335.1 179.5 340.0 C178.8 344.9 177.8 353.1 176.5 359.7 C175.2 366.3 174.1 372.3 171.6 379.5 C169.1 386.7 165.0 395.6 161.7 403.1 C158.4 410.7 153.9 418.9 151.8 424.8 C149.7 430.7 149.0 434.3 148.9 438.6 C148.8 442.9 151.1 448.5 151.5 450.5 C152.2 448.5 154.1 443.9 156.0 438.6 C157.9 433.4 159.6 426.0 163.0 419.0 C166.4 412.0 171.5 402.4 176.5 396.5 C181.5 390.6 185.9 387.5 193.0 383.5 C200.1 379.5 208.0 375.6 218.9 372.5 C229.8 369.4 244.9 366.2 258.4 364.7 C271.9 363.1 284.7 362.5 299.8 363.2 C314.9 363.9 335.1 365.7 349.2 368.6 C363.3 371.5 374.8 375.5 384.7 380.4 C394.6 385.3 401.7 391.8 408.4 398.2 C415.1 404.6 420.2 411.7 425.0 419.0 C429.8 426.3 435.0 438.2 437.0 442.0 C436.8 439.8 437.5 434.3 436.0 428.8 C434.5 423.3 431.1 415.6 428.1 409.0 C425.1 402.4 421.2 395.9 418.2 389.3 C415.2 382.7 411.6 375.2 410.3 369.6 C409.0 364.0 410.7 361.3 410.4 355.4 C410.1 349.5 409.1 340.8 408.5 334.4 C407.9 328.0 407.8 321.7 407.0 317.2 C406.2 312.7 405.1 311.8 403.7 307.6 C402.3 303.5 401.0 297.4 398.9 292.3 C396.8 287.2 394.5 281.8 391.3 277.0 C388.1 272.2 383.9 267.7 379.8 263.7 C375.7 259.7 372.2 256.4 366.5 253.2 C360.8 250.0 348.9 246.0 345.4 244.6 C340.8 244.3 327.6 243.0 318.0 242.6 C308.4 242.2 298.0 242.0 288.0 242.2 C278.0 242.4 267.3 242.6 258.0 243.6 C248.7 244.6 236.3 247.6 232.0 248.4Z" fill="url(#gHelm)"/>
<g clip-path="url(#cHelm)">
<ellipse cx="269" cy="320" rx="36" ry="25" fill="url(#gSpec)"/>
<rect x="290" y="230" width="160" height="240" fill="url(#gHelmDark)"/>
<path d="M437.0 452.0 C437.0 450.3 437.2 445.9 437.0 442.0 C436.8 438.1 437.5 434.3 436.0 428.8 C434.5 423.3 431.1 415.6 428.1 409.0 C425.1 402.4 421.2 395.9 418.2 389.3 C415.2 382.7 411.6 375.2 410.3 369.6 C409.0 364.0 410.7 361.3 410.4 355.4 C410.1 349.5 409.1 340.8 408.5 334.4 C407.9 328.0 407.8 321.7 407.0 317.2 C406.2 312.7 405.1 311.8 403.7 307.6 C402.3 303.5 401.0 297.4 398.9 292.3 C396.8 287.2 394.5 281.8 391.3 277.0 C388.1 272.2 383.9 267.7 379.8 263.7 C375.7 259.7 372.2 256.4 366.5 253.2 C360.8 250.0 348.9 246.0 345.4 244.6" fill="none" stroke="#000" stroke-width="12" stroke-opacity="0.7" filter="url(#b4)"/>
<ellipse cx="288" cy="243" rx="70" ry="9" fill="#004027" opacity="0.5" filter="url(#b4)"/>
<rect x="140" y="372" width="80" height="90" fill="url(#gTipL)"/>
<path d="M360 372 L450 372 L450 460 L400 420Z" fill="#000" opacity="0.55" filter="url(#b8)"/>
<path d="M151.5 450.5 C152.2 448.5 154.1 443.9 156.0 438.6 C157.9 433.4 159.6 426.0 163.0 419.0 C166.4 412.0 171.5 402.4 176.5 396.5 C181.5 390.6 185.9 387.5 193.0 383.5 C200.1 379.5 208.0 375.6 218.9 372.5 C229.8 369.4 251.8 366.0 258.4 364.7" fill="none" stroke="#004027" stroke-width="18" stroke-opacity="0.3" transform="translate(0,-10)" filter="url(#b8)"/>
<path d="M232.0 248.4 C230.2 249.3 225.5 251.6 221.5 254.1 C217.5 256.6 212.2 259.9 208.1 263.7 C203.9 267.5 199.9 271.9 196.6 277.0 C193.2 282.1 190.2 288.6 188.0 294.3 C185.8 300.1 184.4 305.4 183.2 311.5 C182.0 317.6 181.5 325.9 180.9 330.6 C180.3 335.4 180.2 335.1 179.5 340.0 C178.8 344.9 177.8 353.1 176.5 359.7 C175.2 366.3 174.1 372.3 171.6 379.5 C169.1 386.7 165.0 395.6 161.7 403.1 C158.4 410.7 153.9 418.9 151.8 424.8 C149.7 430.7 149.0 434.3 148.9 438.6 C148.8 442.9 151.1 448.5 151.5 450.5" fill="none" stroke="#00301d" stroke-width="8" stroke-opacity="0.35" filter="url(#b4)"/>
</g>
<path d="M193.0 383.5 C197.3 381.7 208.0 375.6 218.9 372.5 C229.8 369.4 244.9 366.2 258.4 364.7 C271.9 363.1 284.7 362.5 299.8 363.2 C314.9 363.9 335.1 365.7 349.2 368.6 C363.3 371.5 378.8 378.4 384.7 380.4" fill="none" stroke="#2ab57f" stroke-width="1.4" stroke-opacity="0.45"/>
<path d="M218.9 372.5 C225.5 371.2 244.9 366.2 258.4 364.7 C271.9 363.1 284.7 362.5 299.8 363.2 C314.9 363.9 341.0 367.7 349.2 368.6" fill="none" stroke="#43c590" stroke-width="1.8" stroke-opacity="0.9"/>
<path d="M176.5 396.5 C179.2 394.3 185.9 387.5 193.0 383.5 C200.1 379.5 208.0 375.6 218.9 372.5 C229.8 369.4 244.9 366.2 258.4 364.7 C271.9 363.1 284.7 362.5 299.8 363.2 C314.9 363.9 335.1 365.7 349.2 368.6 C363.3 371.5 374.8 375.5 384.7 380.4 C394.6 385.3 404.4 395.2 408.4 398.2" fill="none" stroke="#005a35" stroke-width="5" stroke-opacity="0.55" transform="translate(0,-4)" filter="url(#b2)"/>
<g id="skull">
<defs><radialGradient id="gSk" gradientUnits="userSpaceOnUse" cx="284" cy="266" r="42"><stop offset="0" stop-color="#18a06d"/><stop offset="0.3" stop-color="#048252"/><stop offset="0.65" stop-color="#00653c"/><stop offset="1" stop-color="#003520"/></radialGradient>
<linearGradient id="gSn" gradientUnits="userSpaceOnUse" x1="282" y1="0" x2="307" y2="0"><stop offset="0" stop-color="#007345"/><stop offset="0.3" stop-color="#088a56"/><stop offset="0.65" stop-color="#00633b"/><stop offset="1" stop-color="#002c1a"/></linearGradient></defs>
<path d="M276 262 C296 250 324 258 322 284 C330 290 328 302 318 305 L311 308 L311 326 L300 326 L300 300Z" fill="#001c11" opacity="0.55" filter="url(#b2)"/>
<path d="M282.5 298 L306.5 298 L306.8 322 Q294.5 327 282.2 322Z" fill="url(#gSn)"/>
<ellipse cx="273" cy="294.5" rx="7.5" ry="7" fill="#007345"/>
<ellipse cx="271.5" cy="296.5" rx="5" ry="3.6" fill="#0e9561" opacity="0.8"/>
<ellipse cx="316" cy="293.5" rx="7.2" ry="7" fill="#005b36"/>
<path d="M271.8 286 C269.5 266 279 256.3 294.5 256.3 C310 256.3 319 266 317.5 286 C317 296 311 303 302 303 L287 303 C277 303 272.5 296 271.8 286Z" fill="url(#gSk)"/>
<path d="M274 282 C279 276 289 277 293.5 283 L296 283 C300 277 311 276 316 282 L316 288 L274 288Z" fill="#003a23" opacity="0.75"/>
<ellipse cx="283.5" cy="285.8" rx="7.4" ry="5.6" fill="#002919"/>
<ellipse cx="309.6" cy="286" rx="7.4" ry="5.2" fill="#002318"/>
<ellipse cx="283" cy="288" rx="4.2" ry="2.6" fill="#0d9460"/>
<ellipse cx="281.5" cy="287.4" rx="1.6" ry="1" fill="#66d4ae"/>
<ellipse cx="310.5" cy="288" rx="4" ry="2.4" fill="#077f51"/>
<ellipse cx="313" cy="285" rx="1.4" ry="1" fill="#51c996"/>
<path d="M295.5 286 L292.3 299 L299 299Z" fill="#002919"/>
<path d="M292 288 L290.5 303 L287 303Z" fill="#0c8f5c" opacity="0.7"/>
<ellipse cx="296" cy="315" rx="5.6" ry="2.4" fill="#002919"/>
</g>
<ellipse cx="294" cy="345" rx="25" ry="20" fill="#002618" opacity="0.55" filter="url(#b2)"/>
<ellipse cx="292.9" cy="341.4" rx="23.3" ry="20" fill="#006a3f"/>
<path d="M269.8 343 A23.3 20 0 0 0 316 343 A23.3 13 0 0 1 269.8 343Z" fill="#028053"/>
<path d="M271.5 348 A23.3 20 0 0 0 314 349" fill="none" stroke="#39c18d" stroke-width="2.2" transform="translate(0,-1.6)"/>
<ellipse cx="293.2" cy="338" rx="20.8" ry="16.4" fill="#00462a"/>
<ellipse cx="293.3" cy="337.4" rx="19.3" ry="15" fill="url(#gBlue)"/>
<path d="M303 327 l6 3 3 6 -2 8 -5 4 1 -8 -2 -6z" fill="#0f2290" opacity="0.6"/>
<path d="M284.8 344.5l2.4-2.6 1.7 1.2 2.4-.8-.2 2.8 1.8 1.7-2.7.8-1.2 2.5-1.9-1.8-2.8.4z" fill="#dfe9ff"/>
</g>
</svg>
<div id="panel">
  <div id="tbar">
    <svg id="ticon" width="25" height="26" viewBox="0 0 25 26">
      <rect x="0" y="0" width="25" height="26" fill="#7b7b78"/>
      <rect x="2" y="2" width="20" height="22" fill="#1f83c4"/>
      <g stroke="#e4f3ff" stroke-width="1.2">
        <path d="M4 4.5h4M10.5 4.5h3M15.5 4.5h3M4 6.8h6M11 6.8h3M15.5 6.8h3M4 9h3M4 11h2M4 13h2M4 15.2h3M4 18.2h6M11.5 18.2h2.5M15.5 18.2h3M4 20.2h6M11.5 20.2h2.5M15.5 20.2h3M4 22.2h6M11.5 22.2h2.5M15.5 22.2h3"/>
      </g>
      <ellipse cx="13" cy="12.5" rx="6.6" ry="4.4" fill="#d9ecfa"/>
      <ellipse cx="11.5" cy="13.5" rx="3.6" ry="2.6" fill="#ffffff"/>
      <ellipse cx="17" cy="11" rx="2.2" ry="1.8" fill="#f4f0ff"/>
    </svg>
    <div id="ttl">GEM REPORTER</div>
    <div id="tdiv"></div>
    <div id="xbtn"><svg width="12" height="12" viewBox="0 0 12 12"><path d="M2.5 2.2L9.5 9.6M9.5 2.2L2.5 9.6" stroke="#d81e3c" stroke-width="1.1" fill="none"/></svg></div>
  </div>

  <div class="lbl" style="left:5px;top:31px;width:105px;">Total Gem Weight</div>
  <div class="val" style="left:116px;top:31px;width:33px;">.09</div>
  <div class="lbl" style="left:155px;top:31px;width:100px;">Total Gem Count</div>
  <div class="val" style="left:260px;top:31px;width:33px;">24</div>

  <div id="sep"></div>
  <svg id="knob" width="16" height="16" viewBox="0 0 16 16"><circle cx="8" cy="8" r="6.6" fill="#1a1a1a"/><circle cx="8" cy="8" r="5.3" fill="#6a6a6a"/><circle cx="8" cy="8" r="4.2" fill="#4e4e4e"/><path d="M4.6 8.6L8 5.4L11.4 8.6z" fill="#ffffff"/></svg>

  <div class="lbl" style="left:43px;top:66px;width:47px;">Update</div>
  <div class="go" style="left:95px;top:66px;"></div>
  <div class="lbl" style="left:134px;top:66px;width:100px;">Save Report</div>
  <div class="go" style="left:241px;top:66px;"></div>

  <div id="inner">
    <div id="gem">
      <svg width="34" height="31" viewBox="0 0 34 31">
        <defs><radialGradient id="gg" cx="0.45" cy="0.35" r="0.7"><stop offset="0" stop-color="#7474dc"/><stop offset="0.7" stop-color="#6262c8"/><stop offset="1" stop-color="#3a3a86"/></radialGradient></defs>
        <ellipse cx="18.6" cy="18.5" rx="13.2" ry="9.6" transform="rotate(-14 18.6 18.5)" fill="#1e1e1e"/>
        <ellipse cx="16.6" cy="16" rx="13.6" ry="10.4" transform="rotate(-14 16.6 16)" fill="url(#gg)"/>
        <path d="M8.5 19 L17 14 L24 9.5 L29 13 L26 18 L14 19z" fill="#8c8cf0" opacity="0.8"/>
        <ellipse cx="18.6" cy="21.4" rx="8.6" ry="4.6" transform="rotate(-19 18.6 21.4)" fill="#ffffff"/>
      </svg>
    </div>
    <table id="tb">
      <tr><td class="c1">Round</td><td class="c2" colspan="2">Diamond</td></tr>
      <tr><td class="c1">.76 X .76</td><td class="c3">21</td><td class="c4">0.034tw<span class="go g2"></span></td></tr>
      <tr><td class="c1">1.64 X 1.64</td><td class="c3">2</td><td class="c4">0.033tw<span class="go g2"></span></td></tr>
      <tr><td class="c1">1.90 X 1.90</td><td class="c3">1</td><td class="c4">0.026tw<span class="go g2"></span></td></tr>
    </table>
  </div>

  <div id="sel"><span id="seltx">Diamond</span><span id="seltx2">(3.52 spg)</span><div id="dd"><i></i></div></div>
  <div class="lbl" style="left:185px;top:391px;width:72px;height:14px;">Set Material</div>
  <div class="go" style="left:264px;top:392px;"></div>
</div>

</div>
</body></html>
